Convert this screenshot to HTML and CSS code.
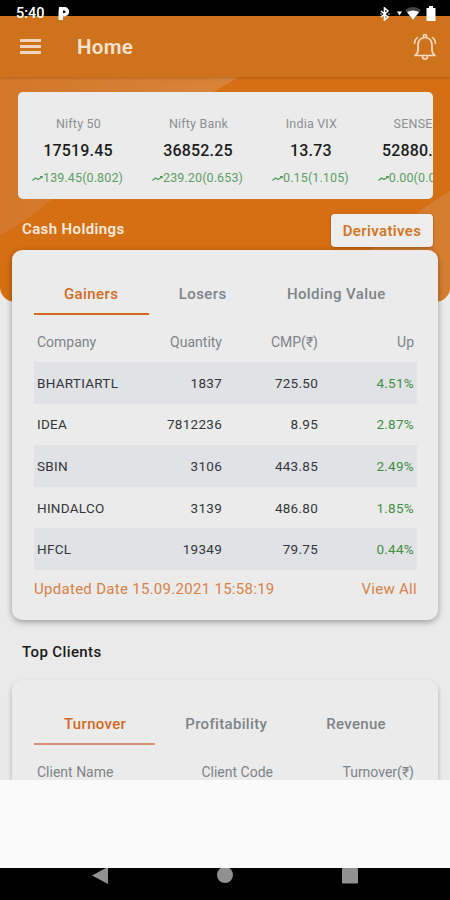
FILE: index.html
```html
<!DOCTYPE html>
<html lang="en">
<head>
  <meta charset="UTF-8" />
  <meta name="viewport" content="width=device-width, initial-scale=1" />
  <title>Home</title>
  <link rel="stylesheet" href="styles.css">
</head>
<body>

<header>
  <div class="status-bar">
    <span class="clock">5:40</span>
    <svg class="parking" width="12" height="15" viewBox="0 0 12 15"><path fill-rule="evenodd" d="M1 1h5.500a4.700 4.700 0 0 1 0 9.400H5V14H.5V7zM5 4.500v2.500h1.300a1.200 1.200 0 0 0 0-2.500z" fill="#fff"/></svg>
    <div class="status-icons">
      <svg width="10" height="14" viewBox="0 0 10 14"><path d="M1 4l7 6-3.500 3V1L8 4l-7 6M.5 7h1M8.500 7h1" fill="none" stroke="#fff" stroke-width="1.600"/></svg>
      <svg class="signal" width="5" height="5" viewBox="0 0 6 5"><path d="M0 0h6L3 5z" fill="#fff"/></svg>
      <svg class="wifi" width="16" height="13" viewBox="0 0 16 13"><path d="M0 3Q8-3 16 3L8 13z" fill="#444"/><path d="M2 5q6-3 12 0L8 13z" fill="#fff"/></svg>
      <svg class="battery" width="10" height="15" viewBox="0 0 10 15"><path d="M3 0h4v2h2.500v13H.5V2H3z" fill="#fff"/></svg>
    </div>
  </div>
  <div class="app-bar">
    <button class="menu" aria-label="Menu"><span></span><span></span><span></span></button>
    <h1>Home</h1>
    <svg class="bell" width="24" height="28" viewBox="0 0 24 28" fill="none" stroke="#f6dcc5" stroke-width="1.700" stroke-linecap="round" stroke-linejoin="round">
      <path d="M2 22.500h20c-2-1.500-3-3-3-5.500v-5c0-4-2.500-7.500-7-7.500S5 8 5 12v5c0 2.500-1 4-3 5.500z"/>
      <path d="M10.500 4V3a1.500 1.500 0 0 1 3 0v1M9.500 23.500a2.500 2.500 0 0 0 5 0"/>
      <path d="M4.500 4.500C2.500 6 1.500 8 1.500 10.500M19.500 4.500c2 1.500 3 3.500 3 6" stroke-width="1.400"/>
    </svg>
  </div>
</header>

<main>
  <section class="hero">
    <svg class="rays" width="450" height="225" viewBox="0 0 450 225">
      <defs>
        <linearGradient id="ray" x1="0" y1="0" x2="1" y2="0">
          <stop offset="0" stop-color="#d4772a"/>
          <stop offset="1" stop-color="#d7853b"/>
        </linearGradient>
      </defs>
      <path d="M0 0h239Q145 54 47 126 25 145 0 158z" fill="url(#ray)"/>
      <path d="M450 114Q420 131 350 190V225h100z" fill="#d57e30"/>
    </svg>
    <div class="ticker">
      <div class="index">
        <span class="name">Nifty 50</span>
        <strong>17519.45</strong>
        <span class="change"><svg width="11" height="7" viewBox="0 0 11 7"><path d="M.5 5.500l3-2.500 2.500 1.500L10 2M8 1.500h2.200v1.800"/></svg>139.45(0.802)</span>
      </div>
      <div class="index">
        <span class="name">Nifty Bank</span>
        <strong>36852.25</strong>
        <span class="change"><svg width="11" height="7" viewBox="0 0 11 7"><path d="M.5 5.500l3-2.500 2.500 1.500L10 2M8 1.500h2.200v1.800"/></svg>239.20(0.653)</span>
      </div>
      <div class="index">
        <span class="name">India VIX</span>
        <strong>13.73</strong>
        <span class="change"><svg width="11" height="7" viewBox="0 0 11 7"><path d="M.5 5.500l3-2.500 2.500 1.500L10 2M8 1.500h2.200v1.800"/></svg>0.15(1.105)</span>
      </div>
      <div class="index">
        <span class="name">SENSEX</span>
        <strong>52880.00</strong>
        <span class="change"><svg width="11" height="7" viewBox="0 0 11 7"><path d="M.5 5.500l3-2.500 2.500 1.500L10 2M8 1.500h2.200v1.800"/></svg>0.00(0.000)</span>
      </div>
    </div>
    <div class="holdings-head">
      <h2>Cash Holdings</h2>
      <button class="derivatives">Derivatives</button>
    </div>
  </section>

  <section class="card holdings">
    <nav class="tabs">
      <a class="active">Gainers</a>
      <a>Losers</a>
      <a>Holding Value</a>
    </nav>
    <div class="row head"><span>Company</span><span>Quantity</span><span>CMP(₹)</span><span>Up</span></div>
    <div class="row striped"><span>BHARTIARTL</span><span>1837</span><span>725.50</span><span class="up">4.51%</span></div>
    <div class="row"><span>IDEA</span><span>7812236</span><span>8.95</span><span class="up">2.87%</span></div>
    <div class="row striped"><span>SBIN</span><span>3106</span><span>443.85</span><span class="up">2.49%</span></div>
    <div class="row"><span>HINDALCO</span><span>3139</span><span>486.80</span><span class="up">1.85%</span></div>
    <div class="row striped"><span>HFCL</span><span>19349</span><span>79.75</span><span class="up">0.44%</span></div>
    <div class="card-foot"><span>Updated Date 15.09.2021 15:58:19</span><a>View All</a></div>
  </section>

  <h2 class="clients-title">Top Clients</h2>

  <section class="card clients">
    <nav class="tabs">
      <a class="active">Turnover</a>
      <a>Profitability</a>
      <a>Revenue</a>
    </nav>
    <div class="row head"><span>Client Name</span><span>Client Code</span><span>Turnover(₹)</span></div>
  </section>
</main>

<div class="bottom-panel"></div>

<footer>
  <svg width="16" height="17" viewBox="0 0 16 17"><path d="M16 0v16L0 7.500 14 0z" fill="#919191"/></svg>
  <svg width="16" height="16" viewBox="0 0 16 16"><circle cx="8" cy="7" r="8" fill="#919191"/></svg>
  <svg width="16" height="16" viewBox="0 0 16 16"><rect width="16" height="15.500" rx="1" fill="#919191"/></svg>
</footer>

</body>
</html>
```
FILE: styles.css
```css
/* Reset */
* {
  box-sizing: border-box;
  margin: 0;
  padding: 0;
}

body {
  width: 450px;
  height: 900px;
  overflow: hidden;
  display: flex;
  flex-direction: column;
  font-family: Roboto, sans-serif;
  background: #eaeaea;
  color: #33363b;
}

svg {
  display: block;
  flex: none;
}

button {
  font-family: inherit;
  border: none;
}

h1,
h2,
strong {
  font-weight: 500;
}

/* Header */
header {
  flex: none;
  height: 77px;
  background: linear-gradient(#000 16px, #cf721c 16px);
  box-shadow: 0 1px 3px rgba(110, 50, 0, 0.35);
  position: relative;
  z-index: 2;
}

.status-bar {
  display: flex;
  align-items: center;
  height: 27px;
  padding: 0 14px 0 16px;
  color: #fff;
}

.clock {
  width: 42px;
  font-size: 14.5px;
  font-weight: 500;
}

.status-icons {
  display: flex;
  align-items: center;
  margin-left: auto;
}

.signal {
  margin-left: 7px;
}

.wifi {
  margin-left: 3px;
}

.battery {
  margin-left: 5px;
}

.app-bar {
  display: flex;
  align-items: center;
  height: 40px;
  padding: 0 13px 0 20px;
  color: #f6e3d2;
}

.menu {
  display: flex;
  flex-direction: column;
  gap: 3px;
  width: 21px;
  margin-top: -2px;
  background: none;
}

.menu span {
  height: 3px;
  background: #f3d6be;
}

h1 {
  margin-left: 36px;
  font-size: 20.5px;
  font-weight: 600;
  letter-spacing: 0.3px;
}

.bell {
  margin-left: auto;
}

/* Hero */
main {
  height: 703px;
  overflow: hidden;
}

.hero {
  position: relative;
  height: 225px;
  padding: 15px 17px 0 18px;
  background: #d56f14;
  border-radius: 0 0 15px 15px;
  overflow: hidden;
}

.rays {
  position: absolute;
  top: 0;
  left: 0;
}

.ticker {
  position: relative;
  display: flex;
  gap: 29px;
  height: 107px;
  padding: 24px 0 0 14px;
  background: #ebebeb;
  border-radius: 5px;
  overflow: hidden;
}

.index {
  flex: none;
  display: flex;
  flex-direction: column;
  align-items: center;
}

.name {
  padding-left: 2px;
  font-size: 12.5px;
  line-height: 16px;
  color: #8c8f93;
  letter-spacing: 0.2px;
}

.index strong {
  margin-top: 9px;
  padding-left: 1px;
  font-size: 16px;
  line-height: 20px;
  letter-spacing: 0.15px;
  color: #1c1c1c;
}

.change {
  display: flex;
  align-items: center;
  margin-top: 9px;
  font-size: 12.5px;
  line-height: 16px;
  letter-spacing: 0.12px;
  color: #5d9e63;
}

.change path {
  fill: none;
  stroke: #4b9c5a;
  stroke-width: 1.2;
}

.holdings-head {
  position: relative;
  display: flex;
  align-items: flex-start;
  justify-content: space-between;
  margin-top: 15px;
  padding-left: 4px;
}

h2 {
  font-size: 15px;
  letter-spacing: 0.38px;
}

.holdings-head h2 {
  line-height: 31px;
  font-weight: 600;
  letter-spacing: 0.38px;
  color: #faeadc;
}

.derivatives {
  width: 102px;
  height: 33px;
  padding-top: 1px;
  font-size: 15px;
  font-weight: 600;
  letter-spacing: 0.35px;
  color: #d3761f;
  background: #ededed;
  border-radius: 4px;
  box-shadow: 0 1px 3px rgba(90, 40, 0, 0.4);
}

/* Cards */
.card {
  position: relative;
  margin: 0 12px;
  padding: 24px 21px 0 22px;
  background: #ebebeb;
  border-radius: 10px;
  box-shadow: 0 2px 6px rgba(0, 0, 0, 0.35);
}

.holdings {
  height: 370px;
  margin-top: -52px;
}

.tabs {
  display: flex;
  height: 41px;
}

.tabs a {
  height: 41px;
  padding: 0 30.4px 0 30px;
  font-size: 15px;
  font-weight: 500;
  letter-spacing: 0.4px;
  line-height: 41px;
  color: #7e8388;
  white-space: nowrap;
}

.tabs a.active {
  color: #d3691e;
  border-bottom: 2px solid #d3691e;
}

.row {
  display: grid;
  grid-template-columns: 1fr 96px 96px 96px;
  align-items: center;
  height: 41.6px;
  padding: 0 3px;
  font-size: 13.5px;
  letter-spacing: 0.27px;
}

.row span + span {
  text-align: right;
}

.head {
  height: 47px;
  padding-top: 7px;
  font-size: 14px;
  letter-spacing: 0;
  color: #7e8388;
}

.striped {
  background: #e0e2e6;
}

.row .up {
  color: #3f8f41;
}

.card-foot {
  display: flex;
  justify-content: space-between;
  padding-top: 9px;
  font-size: 15px;
  line-height: 20px;
  letter-spacing: 0.29px;
  color: #d78147;
}

.clients-title {
  margin: 22px 22px 18px;
  line-height: 20px;
  color: #191919;
}

.clients {
  height: 130px;
  box-shadow: 0 3px 5px rgba(0, 0, 0, 0.25);
}

.clients .tabs a {
  padding-right: 29px;
  letter-spacing: 0.33px;
}

.clients .tabs a.active {
  border-color: #e08b76;
}

.clients .row {
  grid-template-columns: 1fr 120px 141px;
}

/* Bottom */
.bottom-panel {
  flex: none;
  height: 88px;
  background: #fafafa;
}

footer {
  display: flex;
  justify-content: center;
  gap: 109px;
  height: 32px;
  background: #000;
}
```
